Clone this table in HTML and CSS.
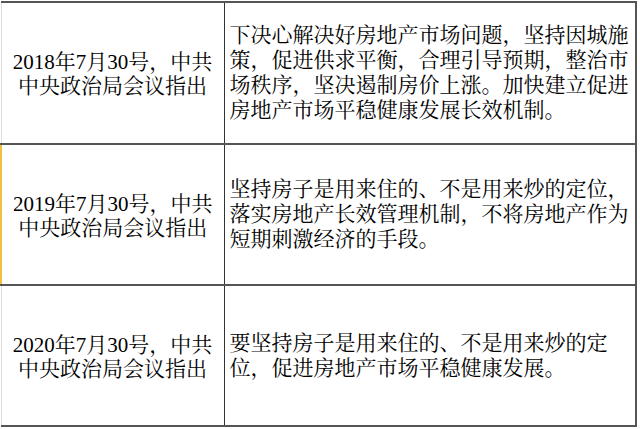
FILE: index.html
```html
<!DOCTYPE html>
<html lang="zh">
<head>
<meta charset="utf-8">
<link rel="stylesheet" href="styles.css">
</head>
<body>
<table class="policy">
  <tr class="row r1">
    <td class="when">2018年7月30号，中共<br>中央政治局会议指出</td>
    <td class="what">下决心解决好房地产市场问题，坚持因城施<br>策，促进供求平衡，合理引导预期，整治市<br>场秩序，坚决遏制房价上涨。加快建立促进<br>房地产市场平稳健康发展长效机制。</td>
  </tr>
  <tr class="row r2">
    <td class="when marked">2019年7月30号，中共<br>中央政治局会议指出</td>
    <td class="what">坚持房子是用来住的、不是用来炒的定位，<br>落实房地产长效管理机制，不将房地产作为<br>短期刺激经济的手段。</td>
  </tr>
  <tr class="row r3">
    <td class="when">2020年7月30号，中共<br>中央政治局会议指出</td>
    <td class="what">要坚持房子是用来住的、不是用来炒的定<br>位，促进房地产市场平稳健康发展。</td>
  </tr>
</table>
</body>
</html>
```
FILE: styles.css
```css
html, body {
  margin: 0;
  padding: 0;
  background: #ffffff;
}
body {
  width: 640px;
  height: 429px;
  overflow: hidden;
}
.policy {
  margin-top: 1px;
  width: 637px;
  border-collapse: collapse;
  table-layout: fixed;
  font-family: "Liberation Serif", "Noto Serif CJK SC", "Noto Sans CJK SC", serif;
  font-size: 21px;
  color: #000000;
}
.policy td {
  border-top: 2px solid #555555;
  border-bottom: 2px solid #555555;
  padding: 0;
  vertical-align: middle;
  white-space: nowrap;
}
.r1 { height: 142px; }
.r2 { height: 141px; }
.r3 { height: 141px; }
.when {
  width: 222px;
  text-align: center;
  line-height: 24px;
  padding-top: 2px !important;
  border-left: 1px solid #dddddd;
  border-right: 1px solid #333333;
}
.when.marked {
  border-left: 2px solid #f2c040;
}
.what {
  text-align: left;
  line-height: 25px;
  padding-left: 5px !important;
  border-right: 2px solid #555555;
}
```
